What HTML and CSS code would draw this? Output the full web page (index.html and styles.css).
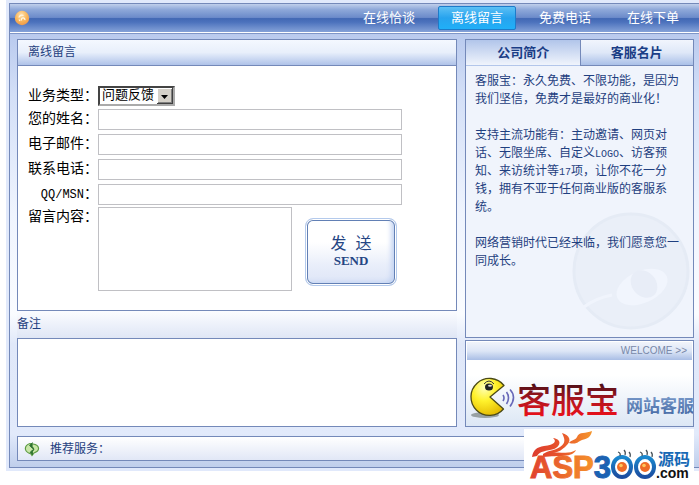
FILE: index.html
```html
<!DOCTYPE html>
<html lang="zh-CN">
<head>
<meta charset="utf-8">
<title>离线留言</title>
<link rel="stylesheet" href="styles.css">
</head>
<body>
<div class="frame">
  <div class="shell">
    <header class="topbar">
      <svg class="orb" width="16" height="16" viewBox="0 0 16 16" aria-hidden="true">
        <defs>
          <radialGradient id="orb" cx=".45" cy=".3" r=".7">
            <stop offset="0" stop-color="#ffe3b0"/><stop offset=".6" stop-color="#f9b55a"/><stop offset="1" stop-color="#ef9a4a"/>
          </radialGradient>
        </defs>
        <circle cx="8" cy="8" r="7.2" fill="url(#orb)"/>
        <path d="M5 7.500a3 3 0 0 1 4.500-2M7.500 10.500a1.800 1.800 0 1 1 3.400-.4M5 9.500l1 1.500" fill="none" stroke="#fff6e4" stroke-width="1.300"/>
      </svg>
      <nav class="nav">
        <a href="#chat">在线恰谈</a>
        <a href="#message" class="active">离线留言</a>
        <a href="#call">免费电话</a>
        <a href="#order">在线下单</a>
      </nav>
    </header>
    <div class="body">
      <div class="columns">
        <main class="main">
          <section class="panel">
            <h1 class="panel-title">离线留言</h1>
            <form class="form">
              <label for="type">业务类型：</label>
              <div class="select">
                <select id="type"><option>问题反馈</option></select>
                <svg class="arrow" width="16" height="16" viewBox="0 0 16 16" aria-hidden="true">
                  <path d="M0 0h16v16H0z" fill="#404040"/><path d="M0 0h15v15H0z" fill="#fff"/><path d="M1 1h14v14H1z" fill="#808080"/><path d="M1 1h13v13H1z" fill="#d4d0c8"/><path d="M4 7h7l-3.500 4z" fill="#000"/>
                </svg>
              </div>
              <label for="name">您的姓名：</label>
              <input id="name" type="text">
              <label for="email">电子邮件：</label>
              <input id="email" type="text">
              <label for="phone">联系电话：</label>
              <input id="phone" type="text">
              <label for="qq"><span class="latin">QQ/MSN</span>：</label>
              <input id="qq" type="text">
              <label for="content">留言内容：</label>
              <div class="compose">
                <textarea id="content"></textarea>
                <button type="button" class="send"><span class="send-cn">发  送</span><span class="send-en">SEND</span></button>
              </div>
            </form>
          </section>
          <h2 class="remark-title">备注</h2>
          <section class="remark"></section>
        </main>
        <aside class="side">
          <section class="about">
            <svg class="ghost" width="118" height="118" viewBox="0 0 118 118" aria-hidden="true">
              <circle cx="59" cy="59" r="57" fill="#eaeff8" stroke="#e5ebf5" stroke-width="3"/>
              <path d="M12 95Q24 86 40 83" fill="none" stroke="#f0f4fc" stroke-width="3"/>
              <ellipse cx="70" cy="75" rx="27" ry="16" transform="rotate(-24 70 75)" fill="#f1f5fd"/>
              <ellipse cx="72" cy="72" rx="12" ry="15" transform="rotate(-40 72 72)" fill="#e8edf7"/>
            </svg>
            <div class="tabs">
              <button type="button" class="tab current">公司简介</button>
              <button type="button" class="tab">客服名片</button>
            </div>
            <div class="about-text">
              <p>客服宝：永久免费、不限功能，是因为<br>我们坚信，免费才是最好的商业化！</p>
              <p>支持主流功能有：主动邀请、网页对<br>话、无限坐席、自定义<span class="narrow">LOGO</span>、访客预<br>知、来访统计等<span class="narrow">17</span>项，让你不花一分<br>钱，拥有不亚于任何商业版的客服系<br>统。</p>
              <p>网络营销时代已经来临，我们愿意您一<br>同成长。</p>
            </div>
          </section>
          <section class="welcome">
            <div class="welcome-bar">WELCOME &gt;&gt;</div>
            <svg class="brand" width="227" height="66" viewBox="0 0 227 66" role="img" aria-label="客服宝 网站客服">
              <defs>
                <radialGradient id="pac" cx=".4" cy=".25" r=".8">
                  <stop offset="0" stop-color="#ffffb8"/><stop offset=".45" stop-color="#fff22c"/><stop offset="1" stop-color="#e3b800"/>
                </radialGradient>
                <linearGradient id="red" x1="0" y1="0" x2="0" y2="1">
                  <stop offset=".2" stop-color="#4c1018"/><stop offset=".55" stop-color="#b51620"/><stop offset=".85" stop-color="#e8101a"/>
                </linearGradient>
                <linearGradient id="steel" x1="0" y1="0" x2="0" y2="1">
                  <stop offset="0" stop-color="#7fa0cf"/><stop offset="1" stop-color="#4468a3"/>
                </linearGradient>
              </defs>
              <ellipse cx="18" cy="55" rx="14" ry="3" fill="#66706c" opacity=".6"/>
              <path d="M37 25.500A18.500 18.500 0 1 0 36.500 49L23 37z" fill="url(#pac)" stroke="#4b4a16" stroke-width="1.300" stroke-linejoin="round"/>
              <ellipse cx="22" cy="27" rx="4" ry="3.500" fill="#222"/><ellipse cx="23" cy="25.800" rx="2" ry="1" fill="#ddd"/>
              <path d="M17 24q5-6 10 0" fill="none" stroke="#333" stroke-width="1"/>
              <path d="M36 35q2 3 0 6M39.500 32q4 5.500 0 12M43 29.500q7 7.500 0 17" fill="none" stroke="#6868b8" stroke-width="1.600"/>
              <text class="brand-name" x="50" y="53" fill="url(#red)">客服宝</text>
              <text class="brand-sub" x="159" y="52" fill="url(#steel)">网站客服</text>
            </svg>
          </section>
        </aside>
      </div>
      <footer class="footer">
        <svg width="16" height="16" viewBox="0 0 16 16" aria-hidden="true">
          <path d="M6 2.500C3 3.500 1 6 1.500 8.500 2 11 4 12 7 13l1 1.500 2-2.500c3-1 4.800-3 4.500-5S12 3.500 9 3z" fill="#c9e6a8" stroke="#5d9b42" stroke-width="1.200"/>
          <path d="M8.500 1.500L5.500 4.500l3 3v-1.500q3 2 0 4.500v-1.500l-2.500 2.500 3 2.500" fill="#2d7230" stroke="#2d7230" stroke-width=".8"/>
        </svg>
        <span>推荐服务：</span>
      </footer>
      <svg class="stamp" width="170" height="51" viewBox="0 0 170 51" role="img" aria-label="ASP300源码.com">
        <defs>
          <linearGradient id="fire" x1="0" y1="0" x2="1" y2="0">
            <stop offset="0" stop-color="#dc3b2e"/><stop offset=".5" stop-color="#e8562b"/><stop offset="1" stop-color="#f5962c"/>
          </linearGradient>
          <linearGradient id="letters" gradientUnits="userSpaceOnUse" x1="5" y1="0" x2="69" y2="0">
            <stop offset="0" stop-color="#e0402f"/><stop offset="1" stop-color="#f5902a"/>
          </linearGradient>
          <linearGradient id="blue" x1="0" y1="0" x2="0" y2="1">
            <stop offset="0" stop-color="#1a88cf"/><stop offset="1" stop-color="#1c4d9f"/>
          </linearGradient>
        </defs>
        <path d="M0 0h170v51H0z" fill="#fff"/>
        <path d="M8 28C9 21 13 18 20 17 31 16 33 12 29 9 38 10 37 17 30 20 22 22 16 22 13 27zM19 25C25 21 30 22 36 18 42 14 41 10 38 4 46 6 48 12 42 17 39 20 34 24 28 24 36 22 44 26 52 21 48 29 36 26 19 28zM45 14C48 10 51 12 53 8 55 2 62 5 68 2 67 8 63 10 58 11 54 12 54 16 45 14z" fill="url(#fire)"/>
        <text class="stamp-main" x="6" y="49" fill="url(#letters)" stroke="url(#letters)">ASP<tspan fill="#1b62b2" stroke="#1b62b2">3</tspan></text>
        <ellipse cx="98" cy="38" rx="9" ry="10" fill="#fff" stroke="url(#blue)" stroke-width="4"/>
        <ellipse cx="121" cy="38" rx="9" ry="10" fill="#fff" stroke="url(#blue)" stroke-width="4"/>
        <circle cx="98" cy="38" r="5" fill="#ef6b27"/><circle cx="121" cy="38" r="5" fill="#ef6b27"/>
        <circle cx="97" cy="36.500" r="1.800" fill="#ffc65b"/><circle cx="120" cy="36.500" r="1.800" fill="#ffc65b"/>
        <path d="M96 27q1-3-2-4M101 26q1-3-1-5M106 28q1-3-1-5M118 27q1-3-2-4M123 26q1-3-1-5M128 28q1-3-1-5" fill="none" stroke="#49545c" stroke-width="1.300"/>
        <text class="stamp-cn" x="134" y="36" fill="#1769b5">源码</text>
        <text class="stamp-com" x="132" y="49" fill="#111">.com</text>
      </svg>
    </div>
  </div>
</div>
</body>
</html>
```
FILE: styles.css
```css
* { box-sizing: border-box; }

body {
  margin: 0;
  padding-bottom: 13px;
  background: #fff;
  color: #1f3f80;
  font: 12px/18px "Liberation Sans", "Noto Sans CJK SC", sans-serif;
}

h1, h2, p { margin: 0; font-size: 12px; font-weight: normal; }
button, input, select, textarea { font: inherit; margin: 0; border-radius: 0; }

.frame { margin-left: 6px; padding: 3px 0 3px 3px; background: #e1e9fb; }
.shell { border: 1px solid #7489b9; border-right: 0; }

.topbar {
  display: flex;
  align-items: center;
  justify-content: space-between;
  height: 29px;
  padding: 0 7px 0 4px;
  border-bottom: 1px solid #fff;
  background: linear-gradient(#c0cfeb 0, #8ea8d9 20%, #6c8bca 48%, #4268b4 52%, #4c72bd 65%, #85a2d8 100%);
}

.nav { display: flex; gap: 10px; }
.nav a {
  width: 78px;
  border: 1px solid transparent;
  border-radius: 2px;
  color: #fff;
  font-size: 13px;
  line-height: 22px;
  text-align: center;
  text-decoration: none;
}
.nav .active {
  border-color: #1d7bc9;
  background: linear-gradient(#5cc0f5, #27a3ee 50%, #20b0f8);
}

.body {
  position: relative;
  padding: 5px 5px 6px 7px;
  border-top: 1px solid #7f96c8;
  background: linear-gradient(#b9caee 0, #d3dff7 60px, #eff4fe 180px, #fafcff 280px, #e0e8f9 310px, #e2eafb 400px, #c0cfec 432px);
}

.columns { display: flex; gap: 8px; }
.main { flex: 1; min-width: 0; }
.side { display: flex; flex-direction: column; gap: 2px; width: 229px; }

.panel, .remark, .about, .welcome, .footer { border: 1px solid #7489b9; }
.panel { background: #fff; }
.panel-title {
  padding-left: 10px;
  border-bottom: 1px solid #7489b9;
  background: linear-gradient(#f4f8ff, #e8effb 50%, #afc3e9);
  line-height: 25px;
}

.form {
  display: grid;
  grid-template-columns: 70px 1fr;
  grid-template-rows: 23px 25px 25px 25px 23px 84px;
  align-items: start;
  padding: 20px 54px 19px 10px;
  color: #000;
  font-size: 14px;
}
.form label { line-height: 19px; text-align: right; white-space: nowrap; }
.latin, .narrow { font-family: "Liberation Mono", monospace; line-height: 12px; }
.latin { font-size: 12px; }
.narrow { font-size: 10px; }
.form input, .form textarea {
  width: 100%;
  height: 21px;
  padding: 1px 3px;
  border: 1px solid #c0c0c4;
  background: #fff;
}

.select { position: relative; width: 77px; }
.select select {
  display: block;
  width: 100%;
  height: 20px;
  padding: 0 0 2px 2px;
  border: 2px solid #444;
  border-right-color: #aaa;
  border-bottom-color: #aaa;
  background: #fff;
  color: #000;
  font-size: 13px;
  line-height: 14px;
  appearance: none;
}
.arrow { position: absolute; top: 2px; right: 2px; pointer-events: none; }

.compose { display: flex; gap: 13px; }
.form .compose textarea { width: 194px; height: 84px; resize: none; }
.send {
  display: flex;
  flex-direction: column;
  align-items: center;
  justify-content: center;
  align-self: flex-end;
  width: 92px;
  height: 68px;
  margin-bottom: 5px;
  padding: 0;
  border: 1px solid #b4caec;
  border-radius: 8px;
  background: linear-gradient(#fff 35%, #e9eefa 70%, #dde5f7);
  box-shadow: inset 0 0 0 1px #fff, inset 0 0 0 2px #6280b5, inset -5px -3px 5px #c4d4f2;
  color: #244583;
}
.send-cn { font-size: 16px; line-height: 18px; white-space: pre; }
.send-en { font: bold 13px/16px "Liberation Serif", serif; }

.remark-title { line-height: 27px; background: linear-gradient(#fbfcff, #dfe6f5); }
.remark { height: 89px; background: #fff; }

.about { position: relative; flex: 1; background: #f0f4fc; }
.ghost { position: absolute; right: 3px; bottom: 7px; }
.tabs { display: flex; }
.tab {
  flex: 1;
  padding: 0;
  border: 0;
  border-left: 1px solid #7489b9;
  border-bottom: 1px solid #7489b9;
  background: linear-gradient(#f1f5fd, #dfe8f8 50%, #aac0e8);
  color: #1a3d86;
  font-size: 13px;
  font-weight: bold;
  line-height: 25px;
}
.tab.current { border-color: transparent; background: linear-gradient(#b1c5ea, #f0f4fc); }
.about-text { position: relative; padding: 6px 9px; white-space: nowrap; }
.about-text p + p { margin-top: 18px; }

.welcome {
  overflow: hidden;
  padding: 1px 0 0 1px;
  background: linear-gradient(#fff 40%, #dce7f5);
}
.welcome-bar {
  margin-right: 1px;
  padding-right: 5px;
  background: linear-gradient(#f1f4fb, #dde6f6 50%, #a9bee5);
  color: #7888a8;
  font-size: 10px;
  line-height: 18px;
  text-align: right;
}
.brand { display: block; }
.brand-name { font: 500 34px "Noto Sans CJK SC", sans-serif; }
.brand-sub { font: bold 17px "Noto Sans CJK SC", sans-serif; }

.footer {
  display: flex;
  align-items: center;
  gap: 10px;
  height: 25px;
  margin-top: 9px;
  padding-left: 6px;
  background: linear-gradient(#fff, #e1e7f6);
}

.stamp { position: absolute; right: 5px; bottom: -13px; }
.stamp-main { font: bold 31px "Liberation Sans", sans-serif; stroke-width: 1px; }
.stamp-cn { font: bold 16px "Noto Sans CJK SC", sans-serif; }
.stamp-com { font: bold 14px "Liberation Sans", sans-serif; }
```
